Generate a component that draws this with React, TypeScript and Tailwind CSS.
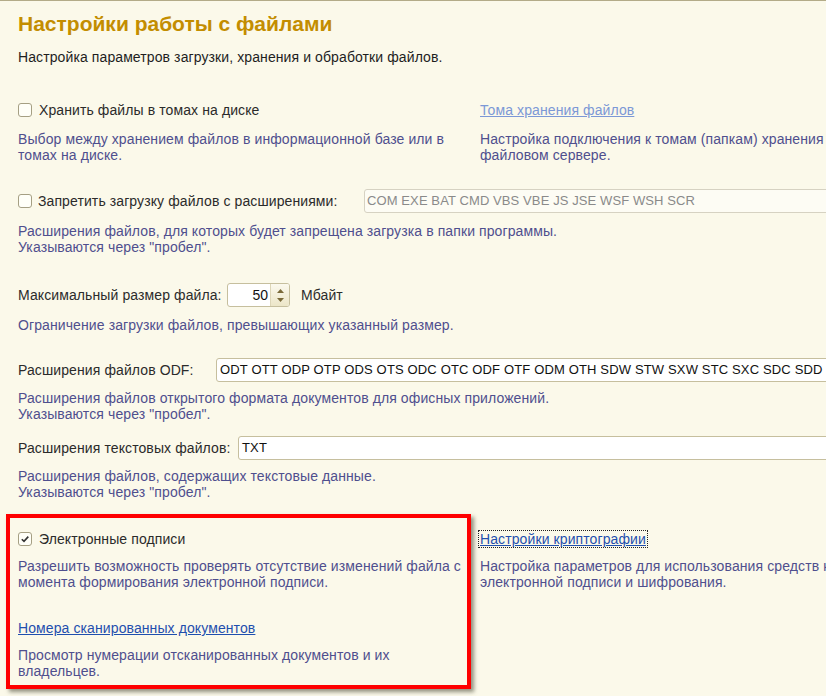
import React from "react";

const font = { fontFamily: '"Liberation Sans", Arial, sans-serif' };

const descCls = "text-[14px] leading-[16px] tracking-[0.1px] text-[#4f4f8e] whitespace-nowrap";
const labelCls = "text-[14px] leading-[16px] tracking-[0.1px] text-[#2b2b2b] whitespace-nowrap flex-shrink-0";
const inputCls =
  "h-[24px] w-[700px] flex-shrink-0 rounded-[3px] border border-[#c6bf9e] bg-white flex items-center px-[3px] text-[13px] tracking-[0.15px] text-[#111] whitespace-nowrap";

function CheckBox({ checked }: { checked?: boolean }) {
  return (
    <span className="w-[14px] h-[14px] rounded-[3px] border border-[#a59f83] bg-[#fffff8] flex items-center justify-center flex-shrink-0">
      {checked && (
        <svg width="10" height="10" viewBox="0 0 10 10">
          <path d="M1.8 5.2 L4 7.4 L8.3 2.6" fill="none" stroke="#333" strokeWidth="1.6" />
        </svg>
      )}
    </span>
  );
}

export default function App() {
  return (
    <div className="w-[826px] h-[696px] overflow-hidden bg-[#fbf9ea] border-t border-[#b3ab88] relative" style={font}>
      <div className="pl-[18px] flex flex-col">
        {/* Заголовок */}
        <div className="mt-[9px] h-[28px] leading-[28px] text-[21px] font-bold text-[#c38d00] whitespace-nowrap">
          Настройки работы с файлами
        </div>
        <div className="mt-[11px] text-[14px] leading-[16px] tracking-[0.1px] text-[#1e1e1e] whitespace-nowrap">
          Настройка параметров загрузки, хранения и обработки файлов.
        </div>

        {/* Тома */}
        <div className="mt-[33px] grid grid-cols-[462px_520px]">
          <div className="h-[24px] flex items-center gap-[7px]">
            <CheckBox />
            <span className={labelCls}>Хранить файлы в томах на диске</span>
          </div>
          <div className="h-[24px] flex items-center">
            <span className="text-[14px] leading-[16px] tracking-[0.1px] text-[#7c98d6] underline">Тома хранения файлов</span>
          </div>
          <div className={`mt-[9px] ${descCls}`}>
            Выбор между хранением файлов в информационной базе или в
            <br />
            томах на диске.
          </div>
          <div className={`mt-[9px] ${descCls}`}>
            Настройка подключения к томам (папкам) хранения файлов на
            <br />
            файловом сервере.
          </div>
        </div>

        {/* Запрет расширений */}
        <div className="mt-[26px] h-[24px] flex items-center">
          <CheckBox />
          <span className={`ml-[6px] w-[326px] ${labelCls}`}>Запретить загрузку файлов с расширениями:</span>
          <div className="h-[24px] w-[520px] flex-shrink-0 rounded-[3px] border border-[#d6d2c2] bg-[#fdfcf4] flex items-center px-[2px] text-[13px] tracking-[0.1px] text-[#8a8a8a] whitespace-nowrap">
            COM EXE BAT CMD VBS VBE JS JSE WSF WSH SCR
          </div>
        </div>
        <div className={`mt-[10px] ${descCls}`}>
          Расширения файлов, для которых будет запрещена загрузка в папки программы.
          <br />
          Указываются через "пробел".
        </div>

        {/* Максимальный размер */}
        <div className="mt-[28px] h-[24px] flex items-center">
          <span className={`w-[209px] ${labelCls}`}>Максимальный размер файла:</span>
          <div className="h-[24px] w-[63px] flex-shrink-0 rounded-[3px] border border-[#c6bf9e] bg-white flex items-stretch overflow-hidden">
            <div className="flex-1 flex items-center justify-end pr-[2px] text-[14px] text-[#111]">50</div>
            <div className="w-[19px] border-l border-[#ddd6b8] bg-gradient-to-b from-[#fbf9ee] to-[#ece6c8] flex flex-col items-center justify-center gap-[5px]">
              <svg width="7" height="4" viewBox="0 0 7 4">
                <path d="M0 4 L3.5 0 L7 4 Z" fill="#7a6a3a" />
              </svg>
              <svg width="7" height="4" viewBox="0 0 7 4">
                <path d="M0 0 L3.5 4 L7 0 Z" fill="#7a6a3a" />
              </svg>
            </div>
          </div>
          <span className={`ml-[11px] ${labelCls}`}>Мбайт</span>
        </div>
        <div className={`mt-[10px] ${descCls}`}>Ограничение загрузки файлов, превышающих указанный размер.</div>

        {/* ODF */}
        <div className="mt-[25px] h-[24px] flex items-center">
          <span className={`w-[198px] ${labelCls}`}>Расширения файлов ODF:</span>
          <div className={inputCls}>
            ODT OTT ODP OTP ODS OTS ODC OTC ODF OTF ODM OTH SDW STW SXW STC SXC SDC SDD STI
          </div>
        </div>
        <div className={`mt-[8px] ${descCls}`}>
          Расширения файлов открытого формата документов для офисных приложений.
          <br />
          Указываются через "пробел".
        </div>

        {/* Текстовые */}
        <div className="mt-[14px] h-[24px] flex items-center">
          <span className={`w-[220px] ${labelCls}`}>Расширения текстовых файлов:</span>
          <div className={inputCls}>TXT</div>
        </div>
        <div className={`mt-[8px] ${descCls}`}>
          Расширения файлов, содержащих текстовые данные.
          <br />
          Указываются через "пробел".
        </div>

        {/* Электронные подписи */}
        <div className="mt-[27px] grid grid-cols-[462px_520px]">
          <div className="h-[24px] flex items-center gap-[7px]">
            <CheckBox checked />
            <span className={labelCls}>Электронные подписи</span>
          </div>
          <div className="h-[24px] flex items-center">
            <span className="-ml-[1px] px-[1px] outline-1 outline-dotted outline-[#222] text-[14px] leading-[16px] tracking-[0.1px] text-[#1f4fae] underline">
              Настройки криптографии
            </span>
          </div>
          <div className={`mt-[7px] ${descCls}`}>
            Разрешить возможность проверять отсутствие изменений файла с
            <br />
            момента формирования электронной подписи.
          </div>
          <div className={`mt-[7px] ${descCls}`}>
            Настройка параметров для использования средств криптографии для
            <br />
            электронной подписи и шифрования.
          </div>
        </div>

        <div className="mt-[30px] text-[14px] leading-[16px] tracking-[0.1px] text-[#1f4fae] underline whitespace-nowrap">
          Номера сканированных документов
        </div>
        <div className={`mt-[11px] ${descCls}`}>
          Просмотр нумерации отсканированных документов и их
          <br />
          владельцев.
        </div>
      </div>

      {/* Выделение */}
      <div className="absolute left-[6px] top-[513px] w-[465px] h-[175px] border-[4px] border-[#ff0000] shadow-[3px_3px_4px_rgba(60,60,40,0.55)] pointer-events-none" />
    </div>
  );
}
